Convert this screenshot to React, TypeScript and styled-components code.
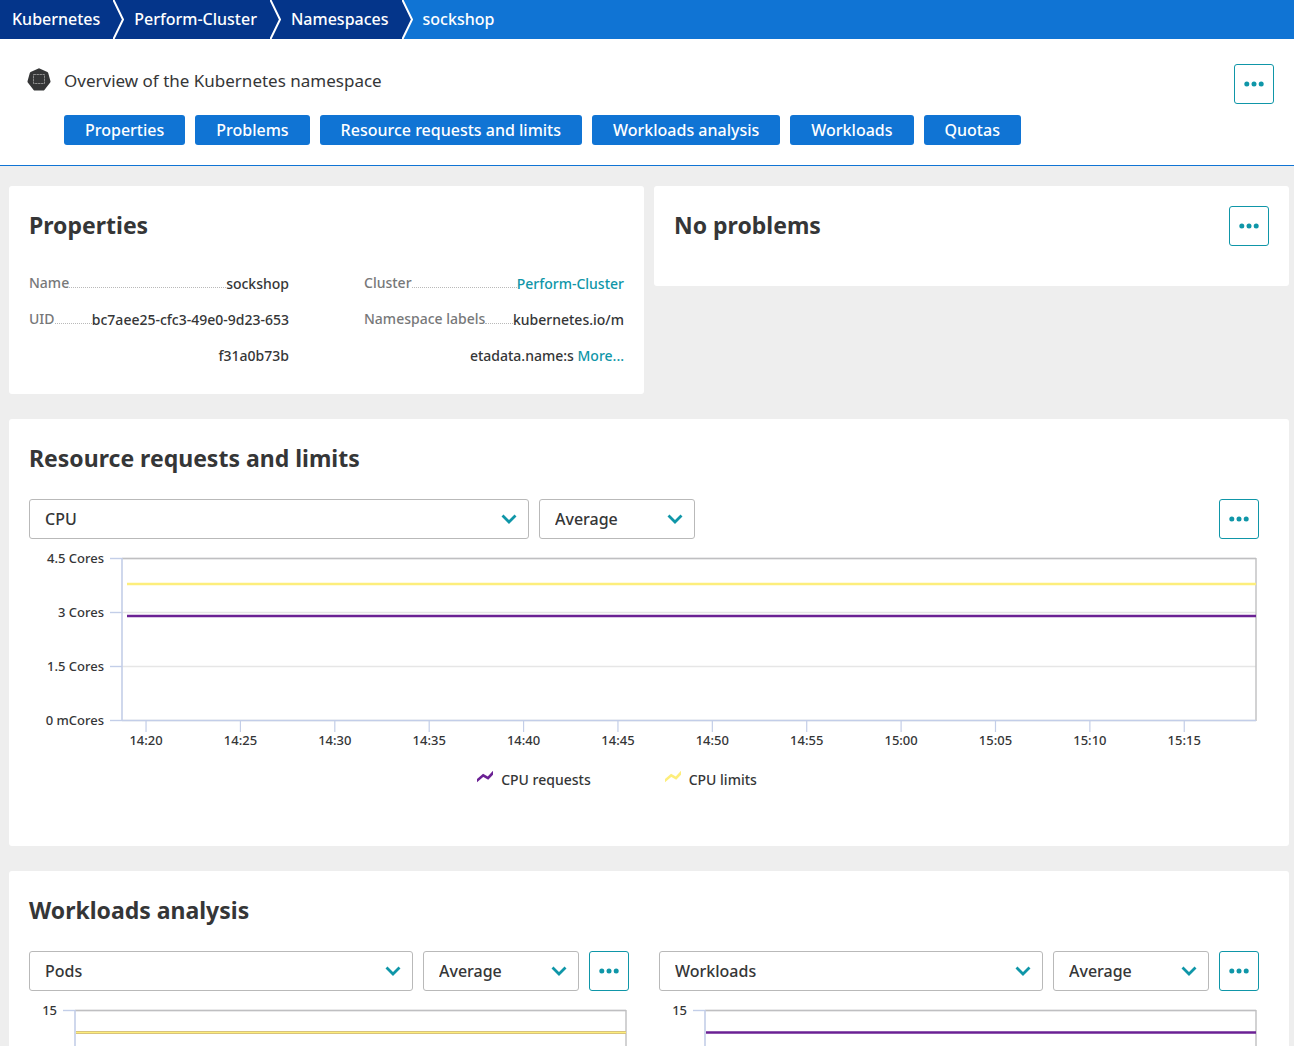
import React from "react";
import styled, { createGlobalStyle } from "styled-components";

const color = {
  navy: "#04358a",
  blue: "#1074d4",
  teal: "#0f96a8",
  text: "#353637",
  muted: "#777879",
  page: "#eeeeee",
  field: "#b9b9b9",
  axis: "#c3cee8",
  grid: "#e6e6e6",
  frame: "#bfbfc1",
  purple: "#6b2194",
  yellow: "#fdee7c",
};

const GlobalStyle = createGlobalStyle`
  *, *::before, *::after { box-sizing: border-box; }
  body {
    margin: 0;
    background: ${color.page};
    color: ${color.text};
    font-family: "Noto Sans", "Open Sans", sans-serif;
    font-size: 16px;
    font-weight: 500;
  }
  button, select { font: inherit; color: inherit; }
`;

const Page = styled.div`
  height: 100vh;
  overflow: hidden;
`;

const Breadcrumbs = styled.nav`
  display: flex;
  height: 39px;
  background: ${color.blue};
  color: #fff;
`;

const Crumb = styled.a<{ $current?: boolean }>`
  display: flex;
  align-items: center;
  padding: 0 13px 2px 10px;
  background: ${(p) => (p.$current ? color.blue : color.navy)};
  color: inherit;
  text-decoration: none;
  white-space: nowrap;

  &:first-child {
    padding-left: 12px;
  }
`;

const CrumbArrow = styled.svg`
  display: block;
  flex: none;
  width: 11px;
  height: 39px;
`;

const Header = styled.header`
  display: flex;
  align-items: flex-start;
  justify-content: space-between;
  padding: 25px 20px 20px 27px;
  background: #fff;
  border-bottom: 1px solid ${color.blue};
`;

const HeaderIcon = styled.svg`
  display: block;
  width: 24px;
  height: 24px;
`;

const HeaderTitle = styled.div`
  display: flex;
  align-items: center;
  gap: 13px;
  height: 32px;
`;

const Title = styled.h1`
  margin: 0;
  font-size: 17px;
  font-weight: 400;
`;

const Tabs = styled.nav`
  display: flex;
  flex-wrap: wrap;
  gap: 10px;
  margin: 19px 0 0 37px;
`;

const Tab = styled.button`
  height: 30px;
  padding: 0 21px;
  border: 0;
  border-radius: 3px;
  background: ${color.blue};
  color: #fff;
  line-height: 30px;
  cursor: pointer;
`;

const MoreButton = styled.button`
  display: flex;
  flex: none;
  align-items: center;
  justify-content: center;
  width: 40px;
  height: 40px;
  padding: 0;
  border: 1px solid ${color.teal};
  border-radius: 3px;
  background: #fff;
  color: ${color.teal};
  cursor: pointer;
`;

const Main = styled.main`
  display: grid;
  gap: 25px;
  padding: 20px 5px 25px 9px;
`;

const TopCards = styled.div`
  display: grid;
  grid-template-columns: 1fr 1fr;
  align-items: start;
  gap: 10px;
`;

const Card = styled.section`
  min-width: 0;
  padding: 20px;
  border-radius: 3px;
  background: #fff;
`;

const ChartCard = styled(Card)`
  padding: 20px 30px 55px 20px;
`;

const CardHead = styled.div`
  display: flex;
  justify-content: space-between;
  min-height: 60px;
`;

const Heading = styled.h2`
  margin: 0;
  font-size: 23px;
  font-weight: 700;
  line-height: 38px;
`;

const PropertyList = styled.dl`
  display: grid;
  grid-template-columns: minmax(0, 1fr) minmax(0, 1fr);
  gap: 0 75px;
  margin: 0;
`;

const Property = styled.div`
  display: flex;
  flex-wrap: wrap;
  align-items: flex-start;
  font-size: 14px;
  line-height: 36px;
`;

const Term = styled.dt`
  color: ${color.muted};
  line-height: 34px;
  white-space: nowrap;
`;

const Leader = styled.span`
  flex: 1;
  height: 22px;
  border-bottom: 1px dotted ${color.field};
`;

const Value = styled.dd<{ $ownLine?: boolean }>`
  flex: ${(p) => (p.$ownLine ? "0 0 100%" : "none")};
  margin: 0;
  text-align: right;
  white-space: nowrap;
`;

const TextLink = styled.a`
  color: ${color.teal};
  text-decoration: none;
`;

const Controls = styled.div`
  display: flex;
  gap: 10px;
`;

const SelectBox = styled.label<{ $width?: string }>`
  display: grid;
  flex: ${(p) => (p.$width ? `0 1 ${p.$width}` : "1 1 0")};
  min-width: 0;
  align-items: center;
`;

const Select = styled.select`
  grid-area: 1 / 1;
  width: 100%;
  height: 40px;
  padding: 0 40px 0 15px;
  border: 1px solid ${color.field};
  border-radius: 3px;
  background: #fff;
  appearance: none;
`;

const Chevron = styled.svg`
  grid-area: 1 / 1;
  justify-self: end;
  width: 16px;
  height: 10px;
  margin-right: 12px;
  pointer-events: none;
`;

const Spacer = styled.div`
  flex: 1;
`;

const ChartPair = styled.div`
  display: grid;
  grid-template-columns: 1fr 1fr;
  gap: 30px;
`;

const ChartArea = styled.div<{ $gutter: number }>`
  padding: 19px 3px 0 ${(p) => p.$gutter}px;
`;

const ChartSvg = styled.svg`
  display: block;
  width: 100%;
  height: 162px;
  overflow: visible;
  fill: ${color.text};
  font-size: 13px;
`;

const Legend = styled.ul`
  display: flex;
  justify-content: center;
  gap: 20px;
  margin: 49px 0 0;
  padding: 0;
  font-size: 14px;
  line-height: 22px;
  list-style: none;
`;

const LegendItem = styled.li`
  display: flex;
  gap: 8px;
  padding-right: 54px;
`;

const LegendMark = styled.svg`
  width: 16px;
  height: 12px;
  margin-top: 2px;
`;

function Dots() {
  return (
    <svg width="20" height="6" viewBox="0 0 20 6" fill="currentColor" aria-hidden="true">
      <circle cx="2.8" cy="3" r="2.5" />
      <circle cx="10" cy="3" r="2.5" />
      <circle cx="17.2" cy="3" r="2.5" />
    </svg>
  );
}

function More() {
  return (
    <MoreButton type="button" aria-label="More actions">
      <Dots />
    </MoreButton>
  );
}

function Arrow({ next }: { next: string }) {
  return (
    <CrumbArrow viewBox="0 0 11 39" aria-hidden="true">
      <rect width="11" height="39" fill={next} />
      <polygon points="0,0 10,19.5 0,39" fill={color.navy} />
      <polyline points="0,-1 10,19.5 0,40" fill="none" stroke="#fff" strokeWidth="2" />
    </CrumbArrow>
  );
}

function Dropdown({ label, value, width }: { label: string; value: string; width?: string }) {
  return (
    <SelectBox $width={width}>
      <Select aria-label={label} defaultValue={value}>
        <option>{value}</option>
      </Select>
      <Chevron viewBox="0 0 16 10" aria-hidden="true">
        <polyline points="1.5,1.5 8,8 14.5,1.5" fill="none" stroke={color.teal} strokeWidth="2.8" />
      </Chevron>
    </SelectBox>
  );
}

type Series = { y: number; stroke: string; outline?: string };

type ChartProps = {
  gutter: number;
  yLabels: string[];
  xLabels?: string[];
  series: Series[];
  inset: number;
};

const PLOT_HEIGHT = 162;
const Y_INTERVALS = 3;

function Chart({ gutter, yLabels, xLabels = [], series, inset }: ChartProps) {
  const step = PLOT_HEIGHT / Y_INTERVALS;
  return (
    <ChartArea $gutter={gutter}>
      <ChartSvg role="img" aria-label="Time series chart">
        {yLabels.map((label, i) => {
          const y = i * step + 0.5;
          return (
            <g key={label}>
              <line x1="0" x2="100%" y1={y} y2={y} stroke={color.grid} strokeWidth="1.4" />
              <line x1="-12" x2="0" y1={y} y2={y} stroke={color.axis} strokeWidth="1.4" />
              <text x="-18" y={y + 4} textAnchor="end">
                {label}
              </text>
            </g>
          );
        })}
        <line x1="0" x2="100%" y1="0.5" y2="0.5" stroke={color.frame} strokeWidth="1.4" />
        <line x1="100%" x2="100%" y1="0" y2={PLOT_HEIGHT + 1} stroke={color.frame} strokeWidth="1.4" />
        <line x1="0" x2="100%" y1={PLOT_HEIGHT + 0.5} y2={PLOT_HEIGHT + 0.5} stroke={color.axis} strokeWidth="1.4" />
        <line x1="0" x2="0" y1="0" y2={PLOT_HEIGHT} stroke={color.axis} strokeWidth="1.6" />
        {xLabels.map((label, i) => {
          const x = `${2.12 + i * 8.323}%`;
          return (
            <g key={label}>
              <line x1={x} x2={x} y1={PLOT_HEIGHT} y2={PLOT_HEIGHT + 12} stroke={color.axis} strokeWidth="1.2" />
              <text x={x} y={PLOT_HEIGHT + 25} textAnchor="middle">
                {label}
              </text>
            </g>
          );
        })}
        {series.map((s) => (
          <g key={s.stroke}>
            {s.outline && (
              <line x1={inset} x2="100%" y1={s.y} y2={s.y} stroke={s.outline} strokeWidth="3" />
            )}
            <line x1={inset} x2="100%" y1={s.y} y2={s.y} stroke={s.stroke} strokeWidth={s.outline ? 1.6 : 2.4} />
          </g>
        ))}
      </ChartSvg>
    </ChartArea>
  );
}

const tabs = ["Properties", "Problems", "Resource requests and limits", "Workloads analysis", "Workloads", "Quotas"];

const times = [
  "14:20", "14:25", "14:30", "14:35", "14:40", "14:45",
  "14:50", "14:55", "15:00", "15:05", "15:10", "15:15",
];

const legend = [
  { name: "CPU requests", stroke: color.purple },
  { name: "CPU limits", stroke: color.yellow },
];

export default function App() {
  return (
    <>
      <GlobalStyle />
      <Page>
        <Breadcrumbs aria-label="Breadcrumb">
          <Crumb href="#kubernetes">Kubernetes</Crumb>
          <Arrow next={color.navy} />
          <Crumb href="#cluster">Perform-Cluster</Crumb>
          <Arrow next={color.navy} />
          <Crumb href="#namespaces">Namespaces</Crumb>
          <Arrow next={color.blue} />
          <Crumb href="#sockshop" $current aria-current="page">
            sockshop
          </Crumb>
        </Breadcrumbs>

        <Header>
          <div>
            <HeaderTitle>
              <HeaderIcon viewBox="0 0 24 24" aria-hidden="true">
                <path
                  d="M12 0.2 L20.4 4 Q21 4.3 21.2 5 L23.5 13.2 Q23.6 13.9 23.2 14.4 L17.4 21.9 Q17 22.5 16.3 22.5 H7.7 Q7 22.5 6.6 21.9 L0.8 14.4 Q0.4 13.9 0.5 13.2 L2.8 5 Q3 4.3 3.6 4 Z"
                  fill={color.text}
                />
                <rect x="6.5" y="6.5" width="11" height="9" fill="none" stroke="#b5b5b5" strokeWidth="0.7" strokeDasharray="2.4 0.6" />
              </HeaderIcon>
              <Title>Overview of the Kubernetes namespace</Title>
            </HeaderTitle>
            <Tabs aria-label="Sections">
              {tabs.map((tab) => (
                <Tab key={tab} type="button">
                  {tab}
                </Tab>
              ))}
            </Tabs>
          </div>
          <More />
        </Header>

        <Main>
          <TopCards>
            <Card>
              <CardHead>
                <Heading>Properties</Heading>
              </CardHead>
              <PropertyList>
                <Property>
                  <Term>Name</Term>
                  <Leader />
                  <Value>sockshop</Value>
                </Property>
                <Property>
                  <Term>Cluster</Term>
                  <Leader />
                  <Value>
                    <TextLink href="#cluster">Perform-Cluster</TextLink>
                  </Value>
                </Property>
                <Property>
                  <Term>UID</Term>
                  <Leader />
                  <Value>bc7aee25-cfc3-49e0-9d23-653</Value>
                  <Value $ownLine>f31a0b73b</Value>
                </Property>
                <Property>
                  <Term>Namespace labels</Term>
                  <Leader />
                  <Value>kubernetes.io/m</Value>
                  <Value $ownLine>
                    etadata.name:s <TextLink href="#labels">More...</TextLink>
                  </Value>
                </Property>
              </PropertyList>
            </Card>
            <Card>
              <CardHead>
                <Heading>No problems</Heading>
                <More />
              </CardHead>
            </Card>
          </TopCards>

          <ChartCard>
            <CardHead>
              <Heading>Resource requests and limits</Heading>
            </CardHead>
            <Controls>
              <Dropdown label="Metric" value="CPU" width="500px" />
              <Dropdown label="Aggregation" value="Average" width="156px" />
              <Spacer />
              <More />
            </Controls>
            <Chart
              gutter={93}
              inset={5}
              yLabels={["4.5 Cores", "3 Cores", "1.5 Cores", "0 mCores"]}
              xLabels={times}
              series={[
                { y: 26, stroke: color.yellow },
                { y: 58, stroke: color.purple },
              ]}
            />
            <Legend>
              {legend.map((item) => (
                <LegendItem key={item.name}>
                  <LegendMark viewBox="0 0 16 12" aria-hidden="true">
                    <polyline points="-1,10.5 6.2,4.3 11,7.2 17,0.6" fill="none" stroke={item.stroke} strokeWidth="2.6" />
                  </LegendMark>
                  {item.name}
                </LegendItem>
              ))}
            </Legend>
          </ChartCard>

          <ChartCard>
            <CardHead>
              <Heading>Workloads analysis</Heading>
            </CardHead>
            <ChartPair>
              <div>
                <Controls>
                  <Dropdown label="Pods metric" value="Pods" />
                  <Dropdown label="Pods aggregation" value="Average" width="156px" />
                  <More />
                </Controls>
                <Chart
                  gutter={46}
                  inset={1}
                  yLabels={["15"]}
                  series={[{ y: 22.5, stroke: color.yellow, outline: "#cdb67c" }]}
                />
              </div>
              <div>
                <Controls>
                  <Dropdown label="Workloads metric" value="Workloads" />
                  <Dropdown label="Workloads aggregation" value="Average" width="156px" />
                  <More />
                </Controls>
                <Chart
                  gutter={46}
                  inset={1}
                  yLabels={["15"]}
                  series={[{ y: 22.5, stroke: color.purple }]}
                />
              </div>
            </ChartPair>
          </ChartCard>
        </Main>
      </Page>
    </>
  );
}
